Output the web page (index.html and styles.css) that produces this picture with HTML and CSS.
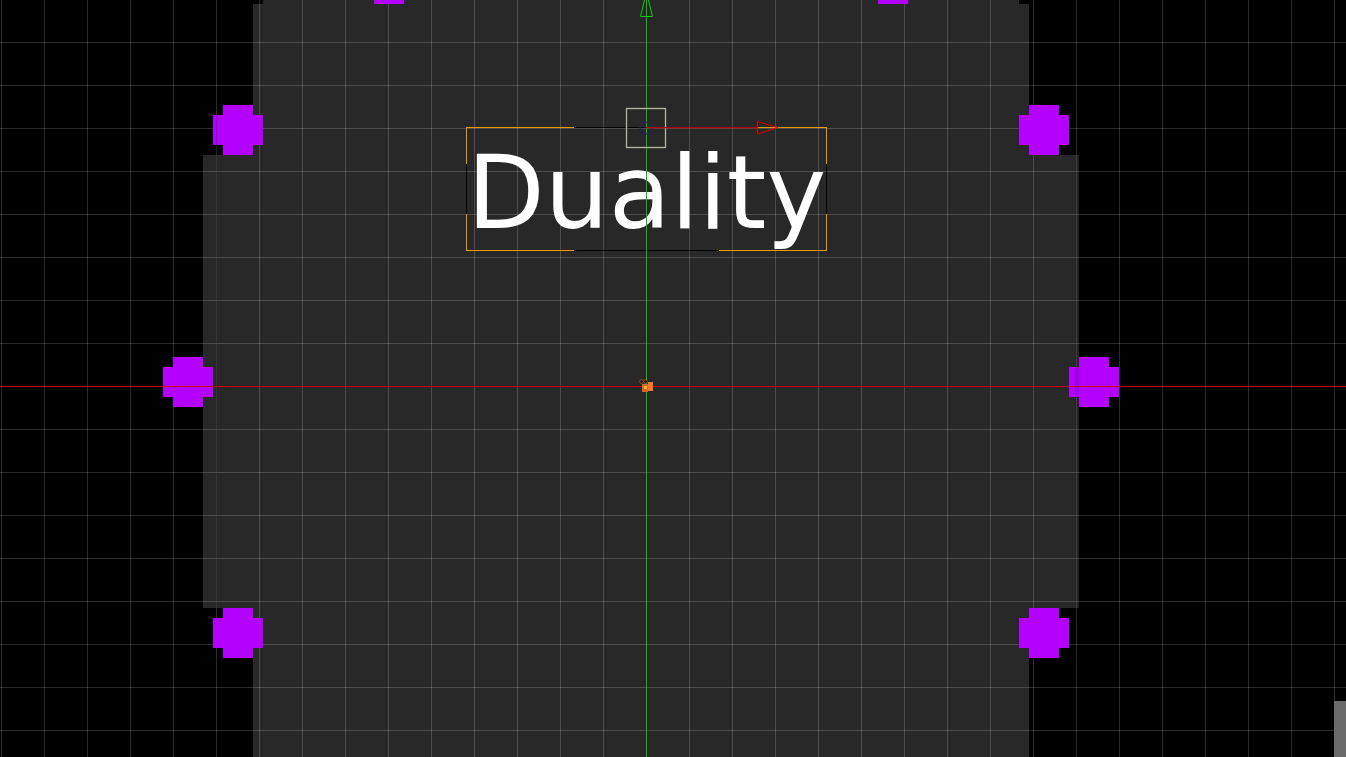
FILE: index.html
```html
<!DOCTYPE html>
<html lang="en">
<head>
<meta charset="utf-8">
<title>Duality scene view</title>
<link rel="stylesheet" href="styles.css">
</head>
<body>
<main class="viewport">
  <div class="body-v"></div>
  <div class="body-top"></div>
  <div class="body-h"></div>
  <div class="grid"></div>

  <div class="handle h-tl"></div>
  <div class="handle h-tr"></div>
  <div class="handle h-ml"></div>
  <div class="handle h-mr"></div>
  <div class="handle h-bl"></div>
  <div class="handle h-br"></div>
  <div class="handle h-tt1"></div>
  <div class="handle h-tt2"></div>

  <div class="edge edge-l"></div>
  <div class="edge edge-r"></div>

  <div class="selection">
    <span class="corner c-tl"></span>
    <span class="corner c-tr"></span>
    <span class="corner c-bl"></span>
    <span class="corner c-br"></span>
  </div>

  <div class="label">Duality</div>

  <svg class="gizmo" width="1346" height="757" viewBox="0 0 1346 757">
    <line class="axis-x" x1="0" y1="386.5" x2="1346" y2="386.5"/>
    <line class="axis-y" x1="646.5" y1="0" x2="646.5" y2="757"/>
    <polygon class="arrow-y" points="640.5,16.5 652.5,16.5 646.5,-8"/>
    <rect class="pivot-box" x="626.5" y="108.5" width="39" height="39"/>
    <circle class="pivot-dot" cx="646" cy="128" r="6"/>
    <line class="arrow-x-line" x1="646" y1="127.6" x2="757" y2="127.6"/>
    <polygon class="arrow-x" points="757.5,121.5 757.5,134 778,127.5"/>
    <g class="origin">
      <rect class="o-1" x="642" y="384" width="6" height="8"/>
      <rect class="o-2" x="648" y="382" width="5" height="9"/>
      <circle class="o-dot" cx="641.5" cy="381.5" r="1.8"/>
      <circle class="o-dot" cx="645.5" cy="381.5" r="1.8"/>
      <rect class="o-3" x="644" y="386" width="3" height="3"/>
    </g>
  </svg>

  <div class="scrollbar"></div>
</main>
</body>
</html>
```

FILE: styles.css
```css
html, body {
  margin: 0;
  padding: 0;
  background: #000;
  overflow: hidden;
}

.viewport {
  position: relative;
  width: 1346px;
  height: 757px;
  background: #000;
  overflow: hidden;
}

/* the grey cross-shaped body */
.body-v, .body-top, .body-h {
  position: absolute;
  background: #282828;
}
.body-v { left: 253px; top: 4px; width: 776px; height: 753px; }
.body-top { left: 263px; top: 0; width: 756px; height: 4px; }
.body-h { left: 203px; top: 155px; width: 876px; height: 453px; }

.grid {
  position: absolute;
  inset: 0;
  background-image:
    linear-gradient(to right, rgba(255,255,255,0.17) 0, rgba(255,255,255,0.17) 1px, transparent 1px),
    linear-gradient(to bottom, rgba(255,255,255,0.17) 0, rgba(255,255,255,0.17) 1px, transparent 1px);
  background-size: 43px 43px, 43px 43px;
  background-position: 1px 0, 0 42px;
}

/* purple resize handles: 50px plus shapes */
.handle {
  position: absolute;
  width: 50px;
  height: 50px;
  background: #b400ff;
  clip-path: polygon(10px 0, 40px 0, 40px 10px, 50px 10px, 50px 40px, 40px 40px, 40px 50px, 10px 50px, 10px 40px, 0 40px, 0 10px, 10px 10px);
}
.h-tl { left: 213px; top: 105px; }
.h-tr { left: 1019px; top: 105px; }
.h-ml { left: 163px; top: 357px; }
.h-mr { left: 1069px; top: 357px; }
.h-bl { left: 213px; top: 608px; }
.h-br { left: 1019px; top: 608px; }
.h-tt1 { left: 364px; top: -46px; }
.h-tt2 { left: 868px; top: -46px; }

.edge {
  position: absolute;
  background: rgba(0,0,0,0.3);
}
.edge-l { left: 216px; top: 115px; width: 1px; height: 493px; }
.edge-r { left: 1075px; top: 155px; width: 4px; height: 453px; background: rgba(0,0,0,0.12); }

/* selection rectangle around the text */
.selection {
  position: absolute;
  left: 466px;
  top: 127px;
  width: 359px;
  height: 122px;
  border: 1px solid #000;
}
.corner {
  position: absolute;
  width: 107px;
  height: 36px;
  border-color: #e89a00;
  border-style: solid;
  border-width: 0;
}
.c-tl { left: -1px; top: -1px; border-top-width: 1px; border-left-width: 1px; }
.c-tr { right: -1px; top: -1px; border-top-width: 1px; border-right-width: 1px; }
.c-bl { left: -1px; bottom: -1px; border-bottom-width: 1px; border-left-width: 1px; }
.c-br { right: -1px; bottom: -1px; border-bottom-width: 1px; border-right-width: 1px; }

.label {
  position: absolute;
  left: 467px;
  top: 143px;
  font-family: "DejaVu Sans", sans-serif;
  font-size: 101px;
  line-height: 100px;
  color: #fff;
  white-space: nowrap;
}

.gizmo {
  position: absolute;
  left: 0;
  top: 0;
}
.axis-x { stroke: #c80000; stroke-width: 1; }
.axis-y { stroke: #00c400; stroke-width: 1; }
.arrow-y { fill: none; stroke: #00d000; stroke-width: 1; }
.pivot-box { fill: none; stroke: #b4b4a4; stroke-width: 1.3; }
.pivot-dot { fill: none; stroke: #202070; stroke-width: 1; }
.arrow-x-line { stroke: #b00000; stroke-width: 1.3; }
.arrow-x { fill: none; stroke: #e00000; stroke-width: 1; }
.o-1 { fill: #d86a20; }
.o-2 { fill: #f07a30; }
.o-3 { fill: #ffb040; }
.o-dot { fill: #111; stroke: #e07020; stroke-width: 0.6; }

.scrollbar {
  position: absolute;
  right: 0;
  bottom: 0;
  width: 12px;
  height: 56px;
  background: #6b6b6b;
}
```
